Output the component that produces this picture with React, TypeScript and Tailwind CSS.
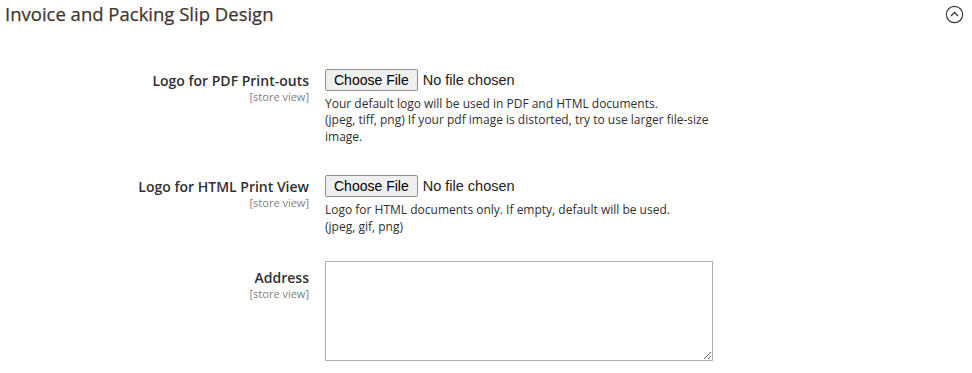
import React from 'react';

type Field = {
  label: string;
  kind: 'file' | 'textarea';
  notes?: string[];
  gap: string;
};

const FIELDS: Field[] = [
  {
    label: 'Logo for PDF Print-outs',
    kind: 'file',
    notes: [
      'Your default logo will be used in PDF and HTML documents.',
      '(jpeg, tiff, png) If your pdf image is distorted, try to use larger file-size image.',
    ],
    gap: 'mb-[30px]',
  },
  {
    label: 'Logo for HTML Print View',
    kind: 'file',
    notes: ['Logo for HTML documents only. If empty, default will be used.', '(jpeg, gif, png)'],
    gap: 'mb-[26px]',
  },
  { label: 'Address', kind: 'textarea', gap: 'mb-[30px]' },
];

function FileControl() {
  return (
    <div className="flex items-center h-[22px] font-['Liberation_Sans',Arial,sans-serif]">
      <span className="h-[22px] px-[8px] flex items-center text-[14px] text-black bg-[#efefef] border border-[#8f8f8f] rounded-[2px] leading-none">
        Choose File
      </span>
      <span className="ml-[5px] text-[14.5px] text-[#222] leading-none">No file chosen</span>
    </div>
  );
}

export default function App() {
  return (
    <div className="w-[972px] h-[373px] bg-white overflow-hidden font-['Open_Sans',sans-serif] text-[#303030]">
      {/* section header */}
      <div className="flex items-center justify-between pl-[5px] pr-[8px] h-[29px]">
        <h2 className="text-[18.5px] font-normal text-[#41362f] leading-none -mt-[1px] [-webkit-text-stroke:0.25px_#41362f]">
          Invoice and Packing Slip Design
        </h2>
        <svg width="19" height="19" viewBox="0 0 20 20" fill="none" stroke="#41362f" strokeWidth="1.2">
          <circle cx="10" cy="10" r="8.6" />
          <path d="M6.3 11.6 L10 7.9 L13.7 11.6" strokeWidth="1.4" />
        </svg>
      </div>

      <div className="pt-[40px]">
        {FIELDS.map((f) => (
          <div key={f.label} className={`flex ${f.gap}`}>
            <div className={`w-[310px] pr-[1px] text-right ${f.kind === 'textarea' ? 'pt-[7px]' : 'pt-[2px]'}`}>
              <div className="text-[14px] font-semibold leading-[19px] text-[#303030]">{f.label}</div>
              <div className="text-[11px] leading-[14px] text-[#808080]">[store view]</div>
            </div>
            <div className="ml-[15px] w-[388px]">
              {f.kind === 'file' ? (
                <>
                  <FileControl />
                  <div className="mt-[5px] text-[12px] leading-[16.4px] text-[#303030]">
                    {f.notes?.map((n) => (
                      <div key={n}>{n}</div>
                    ))}
                  </div>
                </>
              ) : (
                <textarea className="block w-[388px] h-[100px] border border-[#adadad] bg-white outline-none" />
              )}
            </div>
          </div>
        ))}
      </div>
    </div>
  );
}
